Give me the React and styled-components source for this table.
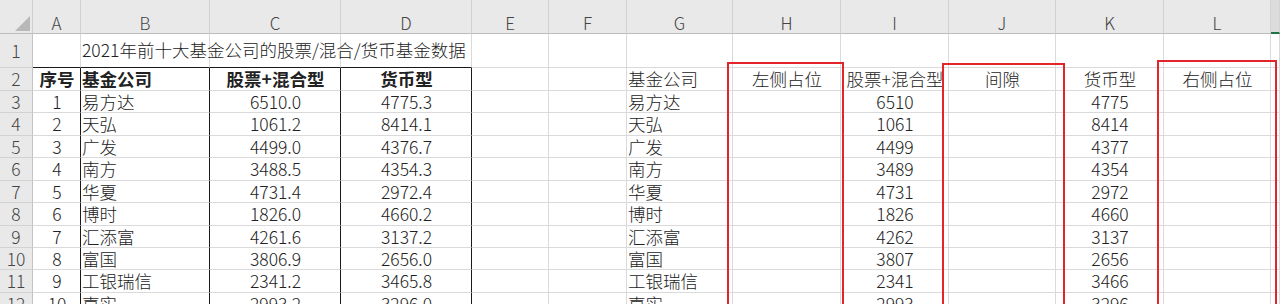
import React from 'react'
import styled, { createGlobalStyle } from 'styled-components'

const GlobalStyle = createGlobalStyle`
  html, body {
    margin: 0;
    padding: 0;
    background: #ffffff;
    overflow: hidden;
  }
`

const colWidths = [33, 48, 129, 131, 131, 77, 78, 106, 108, 108, 107, 108, 107]
const rowHeights = [34, 34, 23, 22, 23, 22, 23, 22, 23, 22, 22, 23, 22]
const letters = ['A', 'B', 'C', 'D', 'E', 'F', 'G', 'H', 'I', 'J', 'K', 'L', '']

const funds = [
  ['易方达', '6510.0', '4775.3', '6510', '4775'],
  ['天弘', '1061.2', '8414.1', '1061', '8414'],
  ['广发', '4499.0', '4376.7', '4499', '4377'],
  ['南方', '3488.5', '4354.3', '3489', '4354'],
  ['华夏', '4731.4', '2972.4', '4731', '2972'],
  ['博时', '1826.0', '4660.2', '1826', '4660'],
  ['汇添富', '4261.6', '3137.2', '4262', '3137'],
  ['富国', '3806.9', '2656.0', '3807', '2656'],
  ['工银瑞信', '2341.2', '3465.8', '2341', '3466'],
  ['嘉实', '2993.2', '3296.0', '2993', '3296'],
]

const Sheet = styled.div`
  position: relative;
  display: grid;
  grid-template-columns: ${colWidths.map(w => w + 'px').join(' ')} 1fr;
  grid-template-rows: ${rowHeights.map(h => h + 'px').join(' ')};
  width: 1280px;
  height: 304px;
  overflow: hidden;
  font-family: "Noto Sans CJK SC", "Liberation Sans", sans-serif;
  font-size: 17.5px;
  font-weight: 300;
  color: #222222;
`

const Corner = styled.div`
  position: relative;
  box-sizing: border-box;
  background: #e9e9e9;
  border-right: 1px solid #cfcfcf;
  border-bottom: 1px solid #bcbcbc;
  &::after {
    content: '';
    position: absolute;
    right: 2px;
    bottom: 2px;
    width: 0;
    height: 0;
    border-left: 15px solid transparent;
    border-bottom: 15px solid #b8b8b8;
  }
`

const ColHead = styled.div`
  box-sizing: border-box;
  display: flex;
  align-items: center;
  justify-content: center;
  padding-top: 12px;
  background: ${p => (p.$active ? '#dcdcdc' : '#e9e9e9')};
  border-right: 1px solid #d2d2d2;
  border-bottom: ${p => (p.$active ? '2px solid #217346' : '1px solid #bcbcbc')};
  color: #444444;
  font-size: 17px;
  line-height: 1;
`

const RowHead = styled.div`
  box-sizing: border-box;
  display: flex;
  align-items: ${p => (p.$tall ? 'flex-end' : 'center')};
  justify-content: center;
  padding-bottom: ${p => (p.$tall ? '8px' : '0')};
  background: #e9e9e9;
  border-right: 1px solid #c4c4c4;
  border-bottom: 1px solid #d2d2d2;
  color: #444444;
  font-size: 17.5px;
  line-height: 1;
`

const Cell = styled.div`
  box-sizing: border-box;
  display: flex;
  align-items: ${p => (p.$tall ? 'flex-end' : 'center')};
  justify-content: ${p => (p.$align === 'center' ? 'center' : 'flex-start')};
  padding: ${p => (p.$tall ? '0 0 9px 1px' : '0 0 0 1px')};
  border-right: 1px solid ${p => (p.$edge ? '#1a1a1a' : '#dadada')};
  border-bottom: 1px solid ${p => (p.$top ? '#1a1a1a' : '#dadada')};
  font-weight: ${p => (p.$bold ? 700 : 300)};
  white-space: nowrap;
  overflow: visible;
  line-height: 1;
  position: relative;
  z-index: ${p => (p.$spill ? 1 : 0)};
`

const RedBox = styled.div`
  position: absolute;
  box-sizing: border-box;
  top: ${p => p.$top}px;
  left: ${p => p.$left}px;
  width: ${p => p.$width}px;
  height: 320px;
  border: 2px solid #e3242b;
  z-index: 2;
  pointer-events: none;
`

function TableRow({ n, cells }) {
  return (
    <>
      <RowHead>{n}</RowHead>
      {cells.map((c, i) => (
        <Cell key={i} $align={c.align} $bold={c.bold} $edge={c.edge}>
          {c.text}
        </Cell>
      ))}
      <Cell />
    </>
  )
}

export default function App() {
  const headerCells = [
    { text: '序号', align: 'center', bold: true, edge: true },
    { text: '基金公司', bold: true, edge: true },
    { text: '股票+混合型', align: 'center', bold: true, edge: true },
    { text: '货币型', align: 'center', bold: true, edge: true },
    { text: '' },
    { text: '' },
    { text: '基金公司' },
    { text: '左侧占位', align: 'center' },
    { text: '股票+混合型', align: 'center' },
    { text: '间隙', align: 'center' },
    { text: '货币型', align: 'center' },
    { text: '右侧占位', align: 'center' },
  ]

  return (
    <>
      <GlobalStyle />
      <Sheet>
        <Corner />
        {letters.map((l, i) => (
          <ColHead key={i} $active={i === 12}>{l}</ColHead>
        ))}

        <RowHead $tall>1</RowHead>
        <Cell $tall $top />
        <Cell $tall $top $spill>2021年前十大基金公司的股票/混合/货币基金数据</Cell>
        <Cell $tall $top />
        <Cell $tall $top />
        {Array.from({ length: 9 }).map((_, i) => (
          <Cell key={i} $tall />
        ))}

        <TableRow n={2} cells={headerCells} />

        {funds.map((f, i) => (
          <TableRow
            key={i}
            n={i + 3}
            cells={[
              { text: String(i + 1), align: 'center', edge: true },
              { text: f[0], edge: true },
              { text: f[1], align: 'center', edge: true },
              { text: f[2], align: 'center', edge: true },
              { text: '' },
              { text: '' },
              { text: f[0] },
              { text: '' },
              { text: f[3], align: 'center' },
              { text: '' },
              { text: f[4], align: 'center' },
              { text: '' },
            ]}
          />
        ))}

        <RedBox $left={727} $top={62} $width={117} />
        <RedBox $left={942} $top={63} $width={123} />
        <RedBox $left={1157} $top={60} $width={120} />
      </Sheet>
    </>
  )
}
